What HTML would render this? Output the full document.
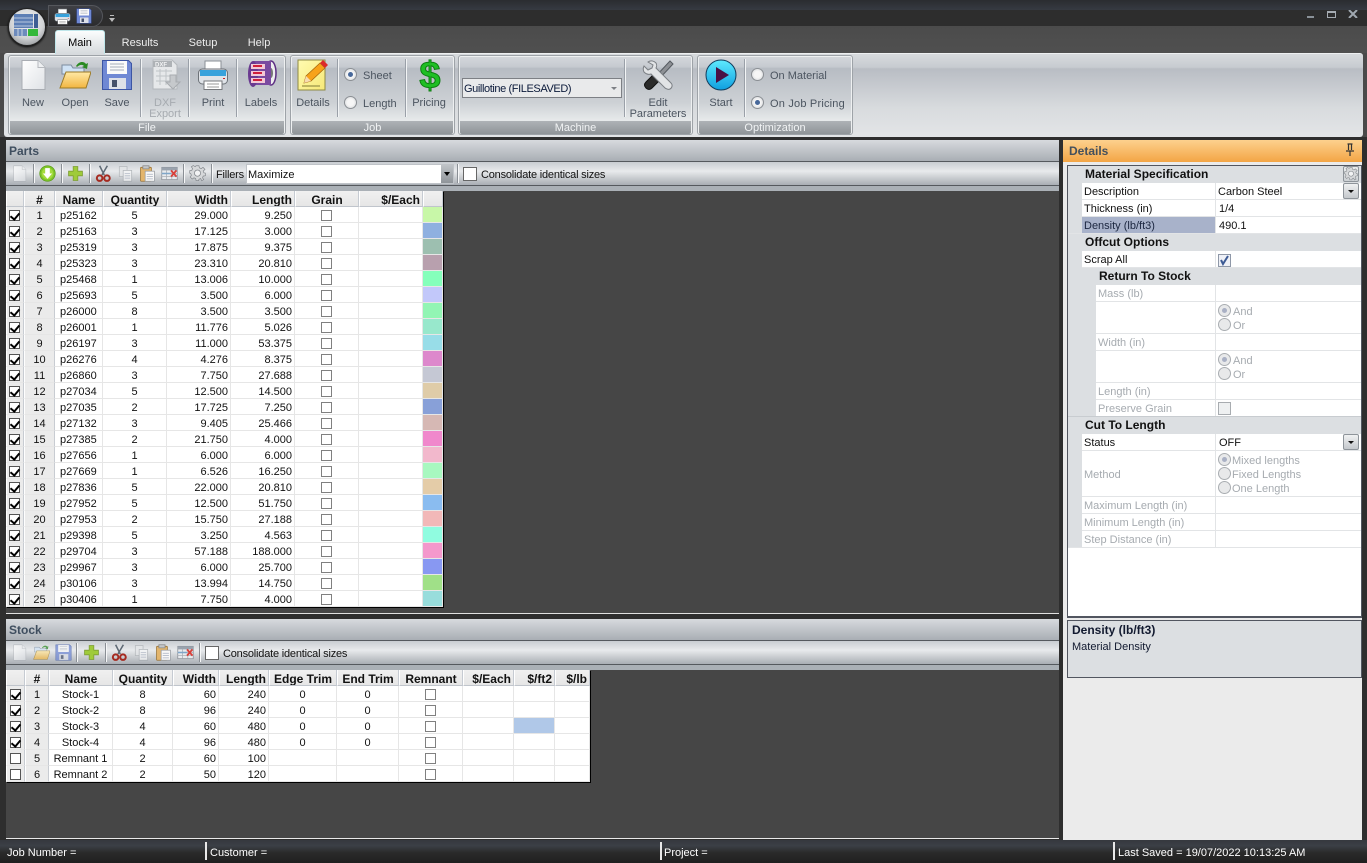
<!DOCTYPE html>
<html><head><meta charset="utf-8"><title>Cut list optimizer</title>
<style>
*{box-sizing:border-box}
html,body{margin:0;padding:0}
body{width:1367px;height:863px;overflow:hidden;position:relative;background:#2b2b2b;font:11px/14px "Liberation Sans",sans-serif;color:#111}
.a{position:absolute}
.t{position:absolute;white-space:nowrap;line-height:14px;height:14px;margin-top:1px}
.bd{font-weight:bold;font-size:12px;margin-top:0}
.c{transform:translateX(-50%)}
.rl{color:#4c5560}
.dis{color:#a6abb0}
.sep{position:absolute;width:2px;background:linear-gradient(90deg,#9aa0a8 50%,#f2f4f5 50%)}
.grp{position:absolute;top:55px;height:80px;border:1px solid #9ea3a8;border-radius:3px;background:linear-gradient(#d5d8dc 0,#c6cad0 14%,#b7bcc3 16%,#cdd1d5 60%,#e6e9ea 82%);box-shadow:inset 0 0 0 1px #eef0f1}
.gl{position:absolute;left:1px;right:1px;bottom:0;height:13px;background:linear-gradient(#aeb2b6,#8f9498);color:#f1f3f4;text-align:center;line-height:15px;border-radius:0 0 2px 2px}
.rad{position:absolute;width:13px;height:13px;border-radius:50%;border:1px solid #8b8f94;background:radial-gradient(#f6f6f6 40%,#cfd2d5)}
.rad.on::after{content:"";position:absolute;left:3px;top:3px;width:5px;height:5px;border-radius:50%;background:#47689a}
.rad.d{border-color:#a9adb1;background:#e8e9ea}
.rad.d.on::after{background:#a9b0c4}
.ph{position:absolute;left:6px;width:1053px;height:21px;background:linear-gradient(#d7dade,#a9aeb4);color:#3f4e5f;font-weight:bold;font-size:12px;padding:4px 3px;line-height:15px}
.tb{position:absolute;left:6px;width:1053px;height:25px;background:linear-gradient(#c9cdd2,#e8eaec 40%,#a9aeb4);border-top:1px solid #55595e;border-bottom:1px solid #55595e}
.ts{position:absolute;width:2px;background:linear-gradient(90deg,#8a8f95 50%,#f6f7f8 50%);height:19px}
.ck{position:absolute;width:14px;height:14px;border:1px solid #666;background:#fff}
.ic{position:absolute}
.f{opacity:.72}
table{border-collapse:separate;border-spacing:0;table-layout:fixed;position:absolute;background:#fff;box-shadow:1px 1px 0 #000}
td,th{height:16px;padding:3px 2px 0;line-height:12px;font-size:11px;overflow:hidden;white-space:nowrap;border-right:1px solid #e6e6e6;border-bottom:1px solid #e6e6e6;font-weight:normal;text-align:center;vertical-align:top}
th{font-weight:bold;font-size:12px;background:linear-gradient(#f0f0f0,#e6e6e6);border-right:1px solid #c6cbd2;border-bottom:1px solid #c0c5cc;border-left:1px solid #fff}
.h{background:#ebebeb;border-left:1px solid #fff;border-right:1px solid #c8ccd2}
.l{text-align:left;padding-left:5px}
.r{text-align:right}
i.b{display:block;width:11px;height:11px;border:1px solid #808080;background:#fff;margin:0 auto;position:relative}
i.k{display:block;width:11px;height:11px;border:1px solid #555;background:#fff;margin:0 auto;position:relative}
i.k.y::after{content:"";position:absolute;left:2px;top:0;width:4px;height:7px;border:solid #000;border-width:0 2px 2px 0;transform:rotate(40deg)}
td:has(i){padding:3px 0 0}
table.p i.k{margin-left:2px}
.pl{position:absolute;height:1px;background:#e2e4e6}
.pg{position:absolute;background:#dcdfe2}
.db{position:absolute;width:16px;height:16px;border:1px solid #8e949a;border-radius:2px;background:linear-gradient(#f0f1f2,#c4c8cc)}
.db::after{content:"";position:absolute;left:4px;top:6px;border:3px solid transparent;border-top:3px solid #111}
.st{position:absolute;top:842px;width:2px;height:18px;background:#e8e8e8}
.sb{color:#fff}
</style></head><body>
<svg width="0" height="0" style="position:absolute"><defs>
<linearGradient id="gd" x1="0" y1="0" x2="1" y2="1"><stop offset="0" stop-color="#fff"/><stop offset="1" stop-color="#dfe2e6"/></linearGradient>
<linearGradient id="gf" x1="0" y1="0" x2="0" y2="1"><stop offset="0" stop-color="#ffe9a6"/><stop offset="1" stop-color="#f2b540"/></linearGradient>
<linearGradient id="gs" x1="0" y1="0" x2="0" y2="1"><stop offset="0" stop-color="#5eeaff"/><stop offset="1" stop-color="#0f9fe0"/></linearGradient>
<linearGradient id="gy" x1="0" y1="0" x2="1" y2="1"><stop offset="0" stop-color="#fffbb0"/><stop offset="1" stop-color="#f6e878"/></linearGradient>
<symbol id="doc" viewBox="0 0 32 32"><path d="M5 1.5h16l7 7v22H5z" fill="url(#gd)" stroke="#a9adb3"/><path d="M21 1.5v7h7" fill="#eef0f2" stroke="#b6b9be"/></symbol>
<symbol id="open" viewBox="0 0 32 32"><path d="M3 6h9l2 3h11v6H3z" fill="#cfe2f5" stroke="#7c8ca0"/><path d="M7 13h25l-5 16H1z" fill="url(#gf)" stroke="#9c7a26"/><path d="M17 7c3-5 8-5 10-2l2-1-1 6-5-2 2-1c-2-2-5-1-7 1z" fill="#2a8a22"/></symbol>
<symbol id="save" viewBox="0 0 32 32"><path d="M1.5 1.5h26l3 3v26h-29z" fill="#6f88d4" stroke="#3c55a4"/><rect x="6" y="2" width="20" height="13" fill="#fafafa"/><path d="M9 5h14M9 8h14M9 11h14" stroke="#a6adba"/><rect x="8" y="19" width="17" height="11" fill="#dde0e8"/><rect x="11" y="21" width="5" height="7" fill="#45506a"/></symbol>
<symbol id="print" viewBox="0 0 32 32"><rect x="8" y="2" width="16" height="10" fill="#fff" stroke="#8a8f96"/><rect x="1.5" y="10" width="29" height="15" rx="4" fill="#dfe3e8" stroke="#6d7278"/><rect x="3" y="11" width="26" height="6" fill="#38a2dc"/><rect x="7" y="22" width="18" height="8.5" fill="#fff" stroke="#77797d"/><path d="M10 25h12M10 28h12" stroke="#999"/><rect x="26" y="19" width="2" height="1" fill="#c22"/></symbol>
<symbol id="dxf" viewBox="0 0 32 32"><path d="M3 1h19l5 5v24H3z" fill="#e6e8ea" stroke="#b4b8bc"/><rect x="3" y="2" width="19" height="6" fill="#aeb2b6"/><text x="5" y="7.500" font-family="Liberation Sans" font-size="6" font-weight="bold" fill="#f2f3f4">DXF</text><path d="M6 12h16M6 17h16M6 22h14M10 10v16M16 10v16" stroke="#bfc3c7"/><path d="M20 16h6v7h4l-7 7-7-7h4z" fill="#c6c9cc" stroke="#a8acb0"/></symbol>
<symbol id="lab" viewBox="0 0 32 32"><ellipse cx="26" cy="14" rx="5" ry="12" fill="#eee" stroke="#5d2e83" stroke-width="1.5"/><ellipse cx="26" cy="14" rx="2" ry="5" fill="#777"/><path d="M8 2h18v24H8z" fill="#7a4aa0"/><ellipse cx="8" cy="15" rx="5" ry="13" fill="#6a3a90"/><rect x="6" y="5" width="14" height="5" fill="#f3c9d6"/><rect x="6" y="12" width="14" height="5" fill="#f3c9d6"/><rect x="6" y="19" width="14" height="5" fill="#f3c9d6"/><path d="M8 7h9M8 14h9M8 21h9" stroke="#d11f3c" stroke-width="2"/></symbol>
<symbol id="det" viewBox="0 0 32 32"><rect x="1" y="1" width="27" height="30" fill="url(#gy)" stroke="#8f8a44"/><path d="M7 24l2-7L23 4l5 5L14 22z" fill="#f7a21a" stroke="#a5660c" stroke-width=".7"/><path d="M23 4l3-3 5 5-3 3z" fill="#dc2a2a"/><path d="M7 24l2-7 5 5z" fill="#f7dcb0"/><path d="M5 27h18" stroke="#bdb560" stroke-width="2"/></symbol>
<symbol id="wr" viewBox="0 0 32 32"><path d="M28 2L14 17l3 3L31 5z" fill="#8d9095" stroke="#555a60"/><path d="M12 15l-8 8c-2 2-2 4 0 6s4 2 6 0l8-8z" fill="#2b2b2b" stroke="#111"/><path d="M6 3c3-2 6-1 8 1 1 2 1 3 0 5l15 15c2 2 1 5-1 6-2 1-3 0-5-1L9 15c-3 1-5 0-7-2-1-2-1-4 0-6l4 4 4-2 1-3z" fill="#e2e4e6" stroke="#7b7f84"/></symbol>
<symbol id="cir" viewBox="0 0 22 22"><circle cx="11" cy="11" r="10" fill="#7fc62a" stroke="#5c9c1a"/><circle cx="11" cy="11" r="7.5" fill="#a4dc3c"/><path d="M8 4h6v7h3l-6 7-6-7h3z" fill="#fff"/></symbol>
<symbol id="plus" viewBox="0 0 22 22"><path d="M8 2h6v6h6v6h-6v6H8v-6H2V8h6z" fill="#9fcb3a" stroke="#7d9d35"/></symbol>
<symbol id="cut" viewBox="0 0 22 22"><path d="M6 1l6 12M16 1L9 13" stroke="#5f6a75" stroke-width="2"/><circle cx="6" cy="17" r="3.6" fill="none" stroke="#a52a20" stroke-width="2.6"/><circle cx="15.500" cy="17" r="3.600" fill="none" stroke="#a52a20" stroke-width="2.600"/></symbol>
<symbol id="cp" viewBox="0 0 22 22"><rect x="3" y="2" width="10" height="13" fill="#e4e6e8" stroke="#a8acb0"/><rect x="8" y="7" width="11" height="14" fill="#f6f7f8" stroke="#a0a5aa"/><path d="M10 11h7M10 14h7M10 17h7" stroke="#a8b0c0"/></symbol>
<symbol id="pst" viewBox="0 0 22 22"><rect x="2" y="3" width="14" height="18" rx="1" fill="#e3b56c" stroke="#9a7334"/><rect x="5" y="1" width="8" height="4" fill="#c4c6c8" stroke="#888"/><rect x="8" y="8" width="12" height="13" fill="#f8f8f8" stroke="#9a9ea4"/><path d="M10 12h8M10 15h8M10 18h8" stroke="#a8b0c0"/></symbol>
<symbol id="gx" viewBox="0 0 22 22"><rect x="1" y="3" width="20" height="16" fill="#e9ebee" stroke="#8a8f96"/><rect x="1" y="3" width="20" height="4" fill="#9aa3ae"/><path d="M1 11h20M1 15h20M7 7v12M14 7v12" stroke="#a9afb6"/><rect x="1" y="10" width="12" height="2" fill="#7fa6c8"/><path d="M13 7l7 8M20 7l-7 8" stroke="#d8403a" stroke-width="2.400"/></symbol>
<symbol id="gear" viewBox="0 0 22 22"><path d="M9 1h4l.6 3 2.600 1 2.500-1.700 2.800 2.800L19 8.600l1 2.400 2 .5v3.500l-3 .6-1 2.400 1.700 2.500-2.800 1.700L15.400 19l-2.400 1-.5 2H9l-.6-3-2.400-1-2.500 1.700L.7 17l1.700-2.600-1-2.400L0 11.500V8l3-.6 1-2.400L2.300 2.500 5 .7l2.600 1.700z" transform="scale(.92) translate(1 0)" fill="#d6d8da" stroke="#85898e"/><circle cx="11" cy="10.500" r="4" fill="#f2f3f4" stroke="#85898e"/></symbol>
</defs></svg>

<!-- window chrome -->
<div class="a" style="left:0;top:0;width:1367px;height:10px;background:linear-gradient(#2a2c30,#363a42)"></div>
<div class="a" style="left:0;top:10px;width:1367px;height:17px;background:#2d2d2d"></div>
<div class="a" style="left:0;top:26px;width:1367px;height:28px;background:linear-gradient(#4b4b4b,#505050)"></div>
<div class="a" style="left:0;top:53px;width:1367px;height:86px;background:#4a4a4a"></div>
<div class="a" style="left:4px;top:53px;width:1359px;height:84px;background:linear-gradient(#d8dbde 0,#c7cbd0 16%,#b9bdc4 18%,#d8dbde 65%,#e3e5e7);border-radius:3px;border-top:1px solid #eef0f1"></div>
<!-- QAT -->
<div class="a" style="left:48px;top:5px;width:55px;height:22px;border-radius:0 12px 12px 0;background:linear-gradient(#3f4045,#2b2b2d);border:1px solid #55575c"></div>
<svg class="ic" style="left:54px;top:8px" width="17" height="17"><use href="#print"/></svg>
<svg class="ic" style="left:76px;top:8px" width="16" height="16"><use href="#save"/></svg>
<div class="a" style="left:110px;top:15px;width:4px;height:1px;background:#bbb"></div>
<div class="a" style="left:109px;top:18px;border:3px solid transparent;border-top:4px solid #bbb"></div>
<!-- App button -->
<div class="a" style="left:8px;top:8px;width:38px;height:38px;border-radius:50%;background:radial-gradient(circle at 50% 35%,#f2f3f4 0,#d2d4d6 55%,#8d9093 90%);border:1px solid #222;box-shadow:0 1px 2px #000"></div>
<svg class="ic" style="left:14px;top:13px" width="25" height="24"><rect x="0" y="1" width="19" height="14" fill="#5d7fb5"/><path d="M0 5h19M0 9h19M0 13h19" stroke="#b7c7de"/><rect x="20" y="1" width="4" height="14" fill="#3f5f94"/><rect x="0" y="16" width="13" height="7" fill="#6d8bbd"/><path d="M4 16v7M8 16v7" stroke="#c9d4e4"/><rect x="14" y="16" width="10" height="7" fill="#34b83a"/></svg>
<!-- window buttons -->
<div class="a" style="left:1307px;top:16px;width:7px;height:2px;background:#8a9198"></div>
<div class="a" style="left:1327px;top:11px;width:9px;height:7px;border:1px solid #a6acb2;border-top-width:2px"></div>
<svg class="ic" style="left:1348px;top:10px" width="10" height="8"><path d="M1 0l8 8M9 0L1 8" stroke="#a0a8b0" stroke-width="2"/></svg>
<!-- tabs -->
<div class="a" style="left:55px;top:30px;width:50px;height:24px;border-radius:3px 3px 0 0;background:linear-gradient(#fbfdfd,#d6dadd);border:1px solid #bfe6ea;border-bottom:0"></div>
<div class="t c" style="left:80px;top:35px;color:#000">Main</div>
<div class="t c" style="left:140px;top:35px;color:#eee">Results</div>
<div class="t c" style="left:203px;top:35px;color:#eee">Setup</div>
<div class="t c" style="left:259px;top:35px;color:#eee">Help</div>

<!-- ribbon groups -->
<div class="grp" style="left:8px;width:278px"><div class="gl">File</div></div>
<div class="grp" style="left:290px;width:165px"><div class="gl">Job</div></div>
<div class="grp" style="left:458px;width:235px"><div class="gl">Machine</div></div>
<div class="grp" style="left:697px;width:156px"><div class="gl">Optimization</div></div>

<svg class="ic" style="left:17px;top:59px" width="32" height="32"><use href="#doc"/></svg>
<svg class="ic" style="left:59px;top:59px" width="32" height="32"><use href="#open"/></svg>
<svg class="ic" style="left:101px;top:59px" width="32" height="32"><use href="#save"/></svg>
<svg class="ic" style="left:150px;top:59px" width="32" height="32"><use href="#dxf"/></svg>
<svg class="ic" style="left:197px;top:59px" width="32" height="32"><use href="#print"/></svg>
<svg class="ic" style="left:245px;top:59px" width="32" height="32"><use href="#lab"/></svg>
<svg class="ic" style="left:297px;top:59px" width="32" height="32"><use href="#det"/></svg>
<div class="t c" style="left:430px;top:52px;font:bold 38px/46px 'Liberation Sans',sans-serif;height:46px;color:#1fbf24;-webkit-text-stroke:1px #0d7d12">$</div>
<svg class="ic" style="left:642px;top:59px" width="32" height="32"><use href="#wr"/></svg>
<svg class="ic" style="left:705px;top:59px" width="32" height="32"><circle cx="16" cy="16" r="15" fill="url(#gs)" stroke="#123c5c"/><path d="M11 8l13 8-13 8z" fill="#4a0f44"/></svg>

<div class="sep" style="left:140px;top:59px;height:58px"></div>
<div class="sep" style="left:188px;top:59px;height:58px"></div>
<div class="sep" style="left:236px;top:59px;height:58px"></div>
<div class="sep" style="left:337px;top:59px;height:58px"></div>
<div class="sep" style="left:405px;top:59px;height:58px"></div>
<div class="sep" style="left:624px;top:59px;height:58px"></div>
<div class="sep" style="left:744px;top:59px;height:58px"></div>

<div class="t c rl" style="left:33px;top:95px">New</div>
<div class="t c rl" style="left:75px;top:95px">Open</div>
<div class="t c rl" style="left:117px;top:95px">Save</div>
<div class="t c dis" style="left:165px;top:95px">DXF</div>
<div class="t c dis" style="left:165px;top:106px">Export</div>
<div class="t c rl" style="left:213px;top:95px">Print</div>
<div class="t c rl" style="left:261px;top:95px">Labels</div>
<div class="t c rl" style="left:313px;top:95px">Details</div>
<div class="t c rl" style="left:429px;top:95px">Pricing</div>
<div class="t c rl" style="left:658px;top:95px">Edit</div>
<div class="t c rl" style="left:658px;top:106px">Parameters</div>
<div class="t c rl" style="left:721px;top:95px">Start</div>

<div class="rad on" style="left:344px;top:68px"></div><div class="t rl" style="left:363px;top:68px">Sheet</div>
<div class="rad" style="left:344px;top:96px"></div><div class="t rl" style="left:363px;top:96px">Length</div>
<div class="rad" style="left:751px;top:68px"></div><div class="t rl" style="left:770px;top:68px">On Material</div>
<div class="rad on" style="left:751px;top:96px"></div><div class="t rl" style="left:770px;top:96px;letter-spacing:.2px">On Job Pricing</div>

<div class="a" style="left:462px;top:78px;width:160px;height:20px;border:1px solid #7d8085;background:#e9eaeb"></div>
<div class="t" style="left:464px;top:81px;color:#0b1a3a;letter-spacing:-.4px">Guillotine (FILESAVED)</div>
<div class="a" style="left:611px;top:87px;border:3px solid transparent;border-top:3px solid #7d8085"></div>

<!-- main dark -->
<div class="a" style="left:0;top:137px;width:1367px;height:705px;background:#2e2e2e"></div>

<!-- Parts -->
<div class="ph" style="top:140px">Parts</div>
<div class="tb" style="top:161px"></div>
<div class="a" style="left:6px;top:186px;width:1053px;height:428px;background:#464646;border-top:5px solid #aab0b6;border-bottom:1px solid #e0e0e0"></div>
<svg class="ic f" style="left:11px;top:165px" width="17" height="17"><use href="#doc"/></svg>
<div class="ts" style="left:33px;top:164px"></div>
<svg class="ic" style="left:39px;top:165px" width="17" height="17"><use href="#cir"/></svg>
<div class="ts" style="left:61px;top:164px"></div>
<svg class="ic" style="left:67px;top:165px" width="17" height="17"><use href="#plus"/></svg>
<div class="ts" style="left:89px;top:164px"></div>
<svg class="ic" style="left:95px;top:165px" width="17" height="17"><use href="#cut"/></svg>
<svg class="ic f" style="left:117px;top:165px" width="17" height="17"><use href="#cp"/></svg>
<svg class="ic" style="left:139px;top:165px" width="17" height="17"><use href="#pst"/></svg>
<svg class="ic" style="left:161px;top:165px" width="17" height="17"><use href="#gx"/></svg>
<div class="ts" style="left:183px;top:164px"></div>
<svg class="ic" style="left:189px;top:165px" width="17" height="17"><use href="#gear"/></svg>
<div class="ts" style="left:211px;top:164px"></div>
<div class="t" style="left:216px;top:167px;letter-spacing:-.2px">Fillers</div>
<div class="a" style="left:246px;top:164px;width:208px;height:20px;background:#fff;border:1px solid #bfc3c8"></div>
<div class="t" style="left:248px;top:167px">Maximize</div>
<div class="a" style="left:441px;top:165px;width:12px;height:18px;background:linear-gradient(#bfc3c7,#8f9499)"></div>
<div class="a" style="left:444px;top:172px;border:3px solid transparent;border-top:4px solid #000"></div>
<div class="ts" style="left:457px;top:164px"></div>
<div class="ck" style="left:463px;top:167px"></div>
<div class="t" style="left:481px;top:167px;letter-spacing:-.2px">Consolidate identical sizes</div>

<table class="p" style="left:6px;top:191px;width:437px">
<colgroup><col style="width:18px"><col style="width:31px"><col style="width:48px"><col style="width:64px"><col style="width:64px"><col style="width:64px"><col style="width:64px"><col style="width:64px"><col style="width:20px"></colgroup>
<tr><th></th><th>#</th><th>Name</th><th>Quantity</th><th class="r">Width</th><th class="r">Length</th><th>Grain</th><th class="r">$/Each</th><th></th></tr>
<tr><td class="h"><i class="k y"></i></td><td class="h">1</td><td class="l">p25162</td><td>5</td><td class="r">29.000</td><td class="r">9.250</td><td><i class="b"></i></td><td></td><td style="background:#c8f7a8"></td></tr>
<tr><td class="h"><i class="k y"></i></td><td class="h">2</td><td class="l">p25163</td><td>3</td><td class="r">17.125</td><td class="r">3.000</td><td><i class="b"></i></td><td></td><td style="background:#8fb0e0"></td></tr>
<tr><td class="h"><i class="k y"></i></td><td class="h">3</td><td class="l">p25319</td><td>3</td><td class="r">17.875</td><td class="r">9.375</td><td><i class="b"></i></td><td></td><td style="background:#9dbfb0"></td></tr>
<tr><td class="h"><i class="k y"></i></td><td class="h">4</td><td class="l">p25323</td><td>3</td><td class="r">23.310</td><td class="r">20.810</td><td><i class="b"></i></td><td></td><td style="background:#b8a0ae"></td></tr>
<tr><td class="h"><i class="k y"></i></td><td class="h">5</td><td class="l">p25468</td><td>1</td><td class="r">13.006</td><td class="r">10.000</td><td><i class="b"></i></td><td></td><td style="background:#85ffbb"></td></tr>
<tr><td class="h"><i class="k y"></i></td><td class="h">6</td><td class="l">p25693</td><td>5</td><td class="r">3.500</td><td class="r">6.000</td><td><i class="b"></i></td><td></td><td style="background:#c2c8fa"></td></tr>
<tr><td class="h"><i class="k y"></i></td><td class="h">7</td><td class="l">p26000</td><td>8</td><td class="r">3.500</td><td class="r">3.500</td><td><i class="b"></i></td><td></td><td style="background:#92f5b4"></td></tr>
<tr><td class="h"><i class="k y"></i></td><td class="h">8</td><td class="l">p26001</td><td>1</td><td class="r">11.776</td><td class="r">5.026</td><td><i class="b"></i></td><td></td><td style="background:#98e8cc"></td></tr>
<tr><td class="h"><i class="k y"></i></td><td class="h">9</td><td class="l">p26197</td><td>3</td><td class="r">11.000</td><td class="r">53.375</td><td><i class="b"></i></td><td></td><td style="background:#98dde8"></td></tr>
<tr><td class="h"><i class="k y"></i></td><td class="h">10</td><td class="l">p26276</td><td>4</td><td class="r">4.276</td><td class="r">8.375</td><td><i class="b"></i></td><td></td><td style="background:#dd88cc"></td></tr>
<tr><td class="h"><i class="k y"></i></td><td class="h">11</td><td class="l">p26860</td><td>3</td><td class="r">7.750</td><td class="r">27.688</td><td><i class="b"></i></td><td></td><td style="background:#c5c8d4"></td></tr>
<tr><td class="h"><i class="k y"></i></td><td class="h">12</td><td class="l">p27034</td><td>5</td><td class="r">12.500</td><td class="r">14.500</td><td><i class="b"></i></td><td></td><td style="background:#dfcca8"></td></tr>
<tr><td class="h"><i class="k y"></i></td><td class="h">13</td><td class="l">p27035</td><td>2</td><td class="r">17.725</td><td class="r">7.250</td><td><i class="b"></i></td><td></td><td style="background:#88a0d8"></td></tr>
<tr><td class="h"><i class="k y"></i></td><td class="h">14</td><td class="l">p27132</td><td>3</td><td class="r">9.405</td><td class="r">25.466</td><td><i class="b"></i></td><td></td><td style="background:#d6b8b4"></td></tr>
<tr><td class="h"><i class="k y"></i></td><td class="h">15</td><td class="l">p27385</td><td>2</td><td class="r">21.750</td><td class="r">4.000</td><td><i class="b"></i></td><td></td><td style="background:#f088cc"></td></tr>
<tr><td class="h"><i class="k y"></i></td><td class="h">16</td><td class="l">p27656</td><td>1</td><td class="r">6.000</td><td class="r">6.000</td><td><i class="b"></i></td><td></td><td style="background:#f2b8cc"></td></tr>
<tr><td class="h"><i class="k y"></i></td><td class="h">17</td><td class="l">p27669</td><td>1</td><td class="r">6.526</td><td class="r">16.250</td><td><i class="b"></i></td><td></td><td style="background:#a8f8c0"></td></tr>
<tr><td class="h"><i class="k y"></i></td><td class="h">18</td><td class="l">p27836</td><td>5</td><td class="r">22.000</td><td class="r">20.810</td><td><i class="b"></i></td><td></td><td style="background:#e4cca8"></td></tr>
<tr><td class="h"><i class="k y"></i></td><td class="h">19</td><td class="l">p27952</td><td>5</td><td class="r">12.500</td><td class="r">51.750</td><td><i class="b"></i></td><td></td><td style="background:#8abcf0"></td></tr>
<tr><td class="h"><i class="k y"></i></td><td class="h">20</td><td class="l">p27953</td><td>2</td><td class="r">15.750</td><td class="r">27.188</td><td><i class="b"></i></td><td></td><td style="background:#f2b8b8"></td></tr>
<tr><td class="h"><i class="k y"></i></td><td class="h">21</td><td class="l">p29398</td><td>5</td><td class="r">3.250</td><td class="r">4.563</td><td><i class="b"></i></td><td></td><td style="background:#90fce0"></td></tr>
<tr><td class="h"><i class="k y"></i></td><td class="h">22</td><td class="l">p29704</td><td>3</td><td class="r">57.188</td><td class="r">188.000</td><td><i class="b"></i></td><td></td><td style="background:#f498cc"></td></tr>
<tr><td class="h"><i class="k y"></i></td><td class="h">23</td><td class="l">p29967</td><td>3</td><td class="r">6.000</td><td class="r">25.700</td><td><i class="b"></i></td><td></td><td style="background:#8898f2"></td></tr>
<tr><td class="h"><i class="k y"></i></td><td class="h">24</td><td class="l">p30106</td><td>3</td><td class="r">13.994</td><td class="r">14.750</td><td><i class="b"></i></td><td></td><td style="background:#a0e088"></td></tr>
<tr><td class="h"><i class="k y"></i></td><td class="h">25</td><td class="l">p30406</td><td>1</td><td class="r">7.750</td><td class="r">4.000</td><td><i class="b"></i></td><td></td><td style="background:#98dddc"></td></tr>
</table>

<!-- Stock -->
<div class="ph" style="top:619px">Stock</div>
<div class="tb" style="top:640px"></div>
<div class="a" style="left:6px;top:665px;width:1053px;height:174px;background:#464646;border-top:5px solid #aab0b6;border-bottom:1px solid #e8e8e8"></div>
<svg class="ic f" style="left:11px;top:644px" width="17" height="17"><use href="#doc"/></svg>
<svg class="ic f" style="left:33px;top:644px" width="17" height="17"><use href="#open"/></svg>
<svg class="ic f" style="left:55px;top:644px" width="17" height="17"><use href="#save"/></svg>
<div class="ts" style="left:76px;top:643px"></div>
<svg class="ic" style="left:83px;top:644px" width="17" height="17"><use href="#plus"/></svg>
<div class="ts" style="left:105px;top:643px"></div>
<svg class="ic" style="left:111px;top:644px" width="17" height="17"><use href="#cut"/></svg>
<svg class="ic f" style="left:133px;top:644px" width="17" height="17"><use href="#cp"/></svg>
<svg class="ic" style="left:155px;top:644px" width="17" height="17"><use href="#pst"/></svg>
<svg class="ic" style="left:177px;top:644px" width="17" height="17"><use href="#gx"/></svg>
<div class="ts" style="left:199px;top:643px"></div>
<div class="ck" style="left:205px;top:646px"></div>
<div class="t" style="left:223px;top:646px;letter-spacing:-.2px">Consolidate identical sizes</div>

<table style="left:6px;top:670px;width:584px">
<colgroup><col style="width:19px"><col style="width:24px"><col style="width:64px"><col style="width:60px"><col style="width:46px"><col style="width:50px"><col style="width:68px"><col style="width:62px"><col style="width:64px"><col style="width:51px"><col style="width:41px"><col style="width:35px"></colgroup>
<tr><th></th><th>#</th><th>Name</th><th>Quantity</th><th class="r">Width</th><th class="r">Length</th><th>Edge Trim</th><th>End Trim</th><th>Remnant</th><th class="r">$/Each</th><th class="r">$/ft2</th><th class="r">$/lb</th></tr>
<tr><td class="h"><i class="k y"></i></td><td class="h">1</td><td>Stock-1</td><td>8</td><td class="r">60</td><td class="r">240</td><td>0</td><td>0</td><td><i class="b"></i></td><td></td><td></td><td></td></tr>
<tr><td class="h"><i class="k y"></i></td><td class="h">2</td><td>Stock-2</td><td>8</td><td class="r">96</td><td class="r">240</td><td>0</td><td>0</td><td><i class="b"></i></td><td></td><td></td><td></td></tr>
<tr><td class="h"><i class="k y"></i></td><td class="h">3</td><td>Stock-3</td><td>4</td><td class="r">60</td><td class="r">480</td><td>0</td><td>0</td><td><i class="b"></i></td><td></td><td style="background:#b0c8e8"></td><td></td></tr>
<tr><td class="h"><i class="k y"></i></td><td class="h">4</td><td>Stock-4</td><td>4</td><td class="r">96</td><td class="r">480</td><td>0</td><td>0</td><td><i class="b"></i></td><td></td><td></td><td></td></tr>
<tr><td class="h"><i class="k"></i></td><td class="h">5</td><td>Remnant 1</td><td>2</td><td class="r">60</td><td class="r">100</td><td></td><td></td><td><i class="b"></i></td><td></td><td></td><td></td></tr>
<tr><td class="h"><i class="k"></i></td><td class="h">6</td><td>Remnant 2</td><td>2</td><td class="r">50</td><td class="r">120</td><td></td><td></td><td><i class="b"></i></td><td></td><td></td><td></td></tr>
</table>

<!-- Details -->
<div class="a" style="left:1063px;top:140px;width:299px;height:702px;background:#ebebeb"></div>
<div class="a" style="left:1063px;top:140px;width:299px;height:22px;background:linear-gradient(#fdd18e,#f3a545);color:#44505c;font-weight:bold;font-size:12px;padding:3px 6px;line-height:16px">Details</div>
<svg class="ic" style="left:1345px;top:143px" width="10" height="14"><path d="M2.500 1h5M3.500 1v6M6.500 1v6M1 8h8M5 8v5" stroke="#333" fill="none" stroke-width="1.200"/></svg>

<div class="a" style="left:1067px;top:165px;width:295px;height:453px;background:#fff;border:1px solid #525660;border-bottom-width:2px"></div>
<div class="pg" style="left:1068px;top:166px;width:14px;height:382px"></div>
<div class="pg" style="left:1082px;top:166px;width:279px;height:17px"></div>
<div class="pg" style="left:1082px;top:234px;width:279px;height:17px"></div>
<div class="pg" style="left:1082px;top:268px;width:279px;height:17px"></div>
<div class="pg" style="left:1082px;top:285px;width:14px;height:132px"></div>
<div class="pg" style="left:1082px;top:417px;width:279px;height:17px"></div>
<div class="pg" style="left:1082px;top:217px;width:133px;height:16px;background:#a8b2ca"></div>
<div class="a" style="left:1215px;top:183px;width:1px;height:365px;background:#e2e4e6"></div>
<div class="pg" style="left:1215px;top:234px;width:1px;height:17px"></div>
<div class="pg" style="left:1215px;top:268px;width:1px;height:17px"></div>
<div class="pg" style="left:1215px;top:417px;width:1px;height:17px"></div>

<div class="pl" style="left:1082px;top:199px;width:279px"></div>
<div class="pl" style="left:1082px;top:216px;width:279px"></div>
<div class="pl" style="left:1068px;top:233px;width:293px"></div>
<div class="pl" style="left:1082px;top:267px;width:279px"></div>
<div class="pl" style="left:1096px;top:301px;width:265px"></div>
<div class="pl" style="left:1096px;top:333px;width:265px"></div>
<div class="pl" style="left:1096px;top:350px;width:265px"></div>
<div class="pl" style="left:1096px;top:382px;width:265px"></div>
<div class="pl" style="left:1096px;top:399px;width:265px"></div>
<div class="pl" style="left:1068px;top:416px;width:293px;background:#c8ccd0"></div>
<div class="pl" style="left:1082px;top:450px;width:279px"></div>
<div class="pl" style="left:1082px;top:496px;width:279px"></div>
<div class="pl" style="left:1082px;top:513px;width:279px"></div>
<div class="pl" style="left:1082px;top:530px;width:279px"></div>
<div class="pl" style="left:1068px;top:547px;width:293px"></div>

<div class="t bd" style="left:1085px;top:167px">Material Specification</div>
<div class="t" style="left:1084px;top:184px">Description</div><div class="t" style="left:1218px;top:184px">Carbon Steel</div>
<div class="t" style="left:1084px;top:201px">Thickness (in)</div><div class="t" style="left:1219px;top:201px">1/4</div>
<div class="t" style="left:1084px;top:218px;color:#1c2740">Density (lb/ft3)</div><div class="t" style="left:1219px;top:218px">490.1</div>
<div class="t bd" style="left:1085px;top:235px">Offcut Options</div>
<div class="t" style="left:1084px;top:252px">Scrap All</div>
<div class="a" style="left:1218px;top:254px;width:13px;height:13px;border:1px solid #8f98a8;background:#eef0f6"></div>
<svg class="ic" style="left:1219px;top:255px" width="11" height="11"><path d="M2 5l2 4 5-8" stroke="#3c5a94" stroke-width="2" fill="none"/></svg>
<div class="t bd" style="left:1099px;top:269px">Return To Stock</div>
<div class="t dis" style="left:1098px;top:286px">Mass (lb)</div>
<div class="rad d on" style="left:1218px;top:304px"></div><div class="t dis" style="left:1233px;top:304px">And</div>
<div class="rad d" style="left:1218px;top:318px"></div><div class="t dis" style="left:1233px;top:318px">Or</div>
<div class="t dis" style="left:1098px;top:335px">Width (in)</div>
<div class="rad d on" style="left:1218px;top:353px"></div><div class="t dis" style="left:1233px;top:353px">And</div>
<div class="rad d" style="left:1218px;top:367px"></div><div class="t dis" style="left:1233px;top:367px">Or</div>
<div class="t dis" style="left:1098px;top:384px">Length (in)</div>
<div class="t dis" style="left:1098px;top:401px">Preserve Grain</div>
<div class="a" style="left:1218px;top:402px;width:13px;height:13px;border:1px solid #a8acb0;background:#eef0f1"></div>
<div class="t bd" style="left:1085px;top:418px">Cut To Length</div>
<div class="t" style="left:1084px;top:435px">Status</div><div class="t" style="left:1219px;top:435px">OFF</div>
<div class="t dis" style="left:1084px;top:467px">Method</div>
<div class="rad d on" style="left:1218px;top:453px"></div><div class="t dis" style="left:1232px;top:453px">Mixed lengths</div>
<div class="rad d" style="left:1218px;top:467px"></div><div class="t dis" style="left:1232px;top:467px">Fixed Lengths</div>
<div class="rad d" style="left:1218px;top:481px"></div><div class="t dis" style="left:1232px;top:481px">One Length</div>
<div class="t dis" style="left:1084px;top:498px">Maximum Length (in)</div>
<div class="t dis" style="left:1084px;top:515px">Minimum Length (in)</div>
<div class="t dis" style="left:1084px;top:532px">Step Distance (in)</div>
<div class="db" style="left:1343px;top:166px;background:linear-gradient(#eceeef,#cdd1d4)"></div>
<svg class="ic" style="left:1344px;top:167px" width="14" height="14"><use href="#gear"/></svg>
<div class="db" style="left:1343px;top:183px"></div>
<div class="db" style="left:1343px;top:434px"></div>

<div class="a" style="left:1067px;top:620px;width:295px;height:58px;background:#dcdfe2;border:1px solid #525660"></div>
<div class="t bd" style="left:1072px;top:623px;color:#121a30">Density (lb/ft3)</div>
<div class="t" style="left:1072px;top:639px;color:#121a30">Material Density</div>

<!-- status bar -->
<div class="a" style="left:0;top:840px;width:1367px;height:23px;background:linear-gradient(#35383e 0,#3b3f46 25%,#2a2a2a 55%,#1f1f1f)"></div>
<div class="st" style="left:205px"></div>
<div class="st" style="left:660px"></div>
<div class="st" style="left:1113px"></div>
<div class="t sb" style="left:7px;top:845px">Job Number =</div>
<div class="t sb" style="left:210px;top:845px">Customer =</div>
<div class="t sb" style="left:664px;top:845px">Project =</div>
<div class="t sb" style="left:1118px;top:845px">Last Saved = 19/07/2022 10:13:25 AM</div>
</body></html>
